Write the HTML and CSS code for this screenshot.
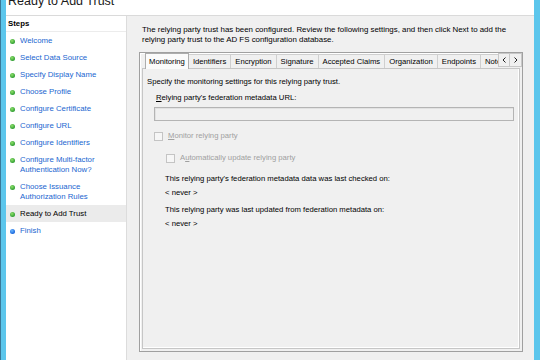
FILE: index.html
```html
<!DOCTYPE html>
<html lang="en">
<head>
  <meta charset="UTF-8">
  <meta name="viewport" content="width=device-width, initial-scale=1.0">
  <title>Add Relying Party Trust Wizard</title>
  <link rel="stylesheet" href="styles.css">
</head>
<body>
  <div class="window">
    <div class="title"><span>Ready to Add Trust</span></div>
    <div class="main">
      <div class="steps">
        <div class="steps-head">Steps</div>
        <div class="step"><i class="dot"></i><span>Welcome</span></div>
        <div class="step"><i class="dot"></i><span>Select Data Source</span></div>
        <div class="step"><i class="dot"></i><span>Specify Display Name</span></div>
        <div class="step"><i class="dot"></i><span>Choose Profile</span></div>
        <div class="step"><i class="dot"></i><span>Configure Certificate</span></div>
        <div class="step"><i class="dot"></i><span>Configure URL</span></div>
        <div class="step"><i class="dot"></i><span>Configure Identifiers</span></div>
        <div class="step"><i class="dot"></i><span>Configure Multi-factor<br>Authentication Now?</span></div>
        <div class="step"><i class="dot"></i><span>Choose Issuance<br>Authorization Rules</span></div>
        <div class="step current"><i class="dot"></i><span>Ready to Add Trust</span></div>
        <div class="step"><i class="dot next"></i><span>Finish</span></div>
      </div>

      <div class="content">
        <p class="intro">The relying party trust has been configured. Review the following settings, and then click Next to add the<br>relying party trust to the AD FS configuration database.</p>

        <div class="tabs-box">
          <div class="tabstrip">
            <div class="tab-list">
              <div class="tab active">Monitoring</div>
              <div class="tab">Identifiers</div>
              <div class="tab">Encryption</div>
              <div class="tab">Signature</div>
              <div class="tab">Accepted Claims</div>
              <div class="tab">Organization</div>
              <div class="tab">Endpoints</div>
              <div class="tab">Notes</div>
            </div>
            <div class="scroll">
              <div class="arrow">
                <svg width="4" height="6" viewBox="0 0 4 6"><path d="M3.5 0.5 L1 3 L3.5 5.5" fill="none" stroke="#222" stroke-width="1"/></svg>
              </div>
              <div class="arrow">
                <svg width="4" height="6" viewBox="0 0 4 6"><path d="M0.5 0.5 L3 3 L0.5 5.5" fill="none" stroke="#222" stroke-width="1"/></svg>
              </div>
            </div>
          </div>

          <div class="tabpage">
            <p class="line">Specify the monitoring settings for this relying party trust.</p>
            <p class="line field-label"><u>R</u>elying party's federation metadata URL:</p>
            <div class="textbox"></div>

            <div class="check first">
              <span class="box"></span>
              <span class="off"><u>M</u>onitor relying party</span>
            </div>
            <div class="check second">
              <span class="box"></span>
              <span class="off">A<u>u</u>tomatically update relying party</span>
            </div>

            <div class="info">
              <p class="line">This relying party's federation metadata data was last checked on:</p>
              <p class="line value">&lt; never &gt;</p>
              <p class="line gap">This relying party was last updated from federation metadata on:</p>
              <p class="line value">&lt; never &gt;</p>
            </div>
          </div>
        </div>
      </div>
    </div>
  </div>
</body>
</html>
```

FILE: styles.css
```css
* {
  box-sizing: border-box;
}
body {
  margin: 0;
  padding-left: 1px;
  height: 360px;
  overflow: hidden;
  background: #3a7898;
  font-family: "Liberation Sans", Arial, sans-serif;
  color: #000;
}
p {
  margin: 0;
}

.window {
  height: 360px;
  display: flex;
  flex-direction: column;
  background: #f0f0f0;
  border-left: 5px solid #5cc6ec;
  border-right: 6px solid #5cc6ec;
}

/* header band, the title is cut at the top */
.title {
  height: 16px;
  background: #fff;
  border-bottom: 1px solid #dadada;
  overflow: hidden;
  padding-left: 2px;
}
.title span {
  display: block;
  margin-top: -5px;
  font-size: 12.5px;
  line-height: 12px;
  color: #1a1a1a;
}

.main {
  flex: 1;
  display: flex;
  min-width: 0;
}

/* left list of steps */
.steps {
  flex: 0 0 121px;
  background: #fff;
  border-right: 1px solid #dcdcdc;
  font-size: 7.8px;
}
.steps-head {
  height: 16px;
  line-height: 15px;
  padding-left: 2px;
  font-weight: bold;
  border-bottom: 1px solid #ececec;
}
.step {
  display: flex;
  align-items: flex-start;
  gap: 5px;
  padding: 4px 0 3px 4px;
  line-height: 10px;
  color: #1a66d0;
  white-space: nowrap;
}
.step.current {
  background: #ebebeb;
  color: #000;
}
.dot {
  flex-shrink: 0;
  width: 5px;
  height: 5px;
  margin-top: 2.5px;
  border-radius: 50%;
  background: radial-gradient(circle at 40% 35%, #8fe06a, #2f9e32 70%);
}
.dot.next {
  background: radial-gradient(circle at 40% 35%, #6bb8ff, #1764dc 70%);
}

/* right side */
.content {
  flex: 1;
  min-width: 0;
  display: flex;
  flex-direction: column;
  font-size: 7.7px;
  line-height: 10px;
}
.intro {
  padding: 9px 0 0 15px;
  font-size: 7.9px;
  white-space: nowrap;
}

.tabs-box {
  margin: 7px 11px 0 12px;
  height: 300px;
  display: flex;
  flex-direction: column;
  border: 1px solid #a0a0a0;
  box-shadow: inset 1px 1px 0 #fff;
  padding: 0 2px 2px 2px;
}
.tabstrip {
  height: 16px;
  display: flex;
  margin-right: -2px;
  position: relative;
  z-index: 1;
}
.tab-list {
  flex: 1;
  min-width: 0;
  display: flex;
  padding-left: 3px;
  overflow: hidden;
}
.tab {
  flex-shrink: 0;
  margin-top: 1px;
  height: 14px;
  padding: 0 4px;
  line-height: 13px;
  border: 1px solid #cfcfcf;
  border-bottom: none;
  margin-right: -1px;
  background: #f0f0f0;
  white-space: nowrap;
}
.tab.active {
  margin-top: 0;
  height: 16px;
  padding: 0 3px;
  line-height: 15px;
  border-color: #adadad;
  background: #fbfbfb;
  position: relative;
  z-index: 2;
}
.scroll {
  display: flex;
  height: 14px;
}
.arrow {
  width: 12px;
  height: 14px;
  display: flex;
  align-items: center;
  justify-content: center;
  border: 1px solid #c8c8c8;
  background: #f0f0f0;
}
.arrow + .arrow {
  border-left: none;
}

.tabpage {
  flex: 1;
  margin-top: -1px;
  border: 1px solid #c6c6c6;
  box-shadow: inset -1px -1px 0 #fff;
  background: #f0f0f0;
  padding: 8px 0 0 4px;
}
.line {
  white-space: nowrap;
}
.field-label {
  margin: 6px 0 0 9px;
}
.textbox {
  width: 360px;
  height: 14px;
  margin: 4px 0 0 7px;
  border: 1px solid #b4b4b4;
  background: #f0f0f0;
  box-shadow: inset 1px 1px 0 #e2e2e2;
}

.check {
  display: flex;
  align-items: center;
  gap: 5px;
  height: 10px;
}
.check.first {
  margin: 10px 0 0 7px;
}
.check.second {
  margin: 12px 0 0 19px;
}
.box {
  width: 9px;
  height: 9px;
  border: 1px solid #c4c4c4;
  background: #f6f6f6;
}
.off {
  color: #a0a0a0;
}

.info {
  margin: 11px 0 0 18px;
}
.value {
  margin-top: 4px;
}
.gap {
  margin-top: 7px;
}
```
